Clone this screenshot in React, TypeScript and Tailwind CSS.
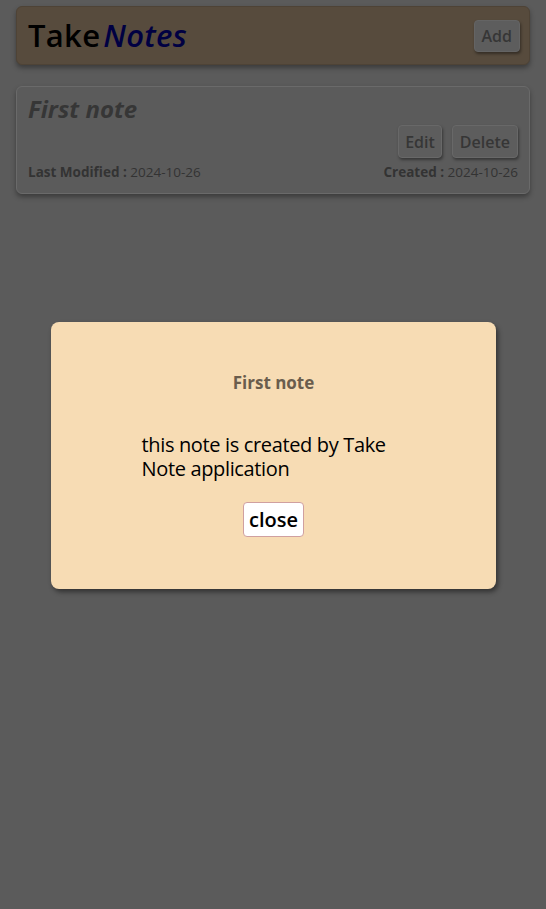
import React from 'react';

const font = { fontFamily: '"Open Sans", "Noto Sans", sans-serif' };

function Header() {
    return (
        <div className="mx-4 mt-[5px] h-[59px] rounded-md border border-[#4e4336] bg-[#574b3d] shadow-[0_3px_5px_rgba(0,0,0,0.35)] flex items-center justify-between pl-[11px] pr-[9px]">
            <h1 className="text-[31px] leading-none font-semibold tracking-[0.3px] flex gap-[3px]">
                <span className="text-black">Take</span>
                <span className="text-[#000042] italic font-semibold">Notes</span>
            </h1>
            <button className="h-[32px] px-[7px] rounded-[4px] bg-[#5d5d5d] border border-[#646464] text-[#363636] text-[16px] font-semibold shadow-[1px_2px_3px_rgba(0,0,0,0.4)]">
                Add
            </button>
        </div>
    );
}

function NoteCard() {
    return (
        <div className="mx-4 mt-[21px] h-[108px] rounded-md border border-[#6a6a6a] bg-[#5b5b5b] shadow-[0_3px_5px_rgba(0,0,0,0.35)] px-[11px] pt-[7px] flex flex-col">
            <h2 className="text-[24px] leading-[30px] font-bold italic text-[#363636]">First note</h2>
            <div className="flex justify-end gap-[10px] mt-[1px]">
                <button className="h-[33px] px-[6px] rounded-[4px] bg-[#5d5d5d] border border-[#686868] text-[#363636] text-[16px] font-semibold shadow-[1px_2px_3px_rgba(0,0,0,0.4)]">
                    Edit
                </button>
                <button className="h-[33px] px-[7px] rounded-[4px] bg-[#5d5d5d] border border-[#686868] text-[#363636] text-[16px] font-semibold shadow-[1px_2px_3px_rgba(0,0,0,0.4)]">
                    Delete
                </button>
            </div>
            <div className="flex justify-between mt-[5px] text-[13.5px] leading-[18px] text-[#333333]">
                <span><span className="font-bold">Last Modified :</span> 2024-10-26</span>
                <span><span className="font-bold">Created :</span> 2024-10-26</span>
            </div>
        </div>
    );
}

function NoteModal() {
    return (
        <div className="absolute left-[51px] top-[322px] w-[445px] h-[267px] rounded-lg bg-[#f7dcb4] shadow-[2px_3px_5px_rgba(0,0,0,0.45)] flex flex-col items-center">
            <h3 className="mt-[50px] text-[17px] leading-[22px] font-bold text-[#6a5d4d]">First note</h3>
            <p className="mt-[39px] w-[264px] text-[20px] leading-[24px] tracking-[-0.35px] text-black">
                this note is created by Take Note application
            </p>
            <button className="mt-[21px] h-[35px] px-[5px] rounded-[4px] bg-white border border-[#d0a0a0] text-black text-[20px] font-semibold">
                close
            </button>
        </div>
    );
}

export default function App() {
    return (
        <div className="relative min-h-[909px] bg-[#5b5b5b] pt-px" style={font}>
            <Header />
            <NoteCard />
            {/* Modal over the dimmed page */}
            <NoteModal />
        </div>
    );
}
